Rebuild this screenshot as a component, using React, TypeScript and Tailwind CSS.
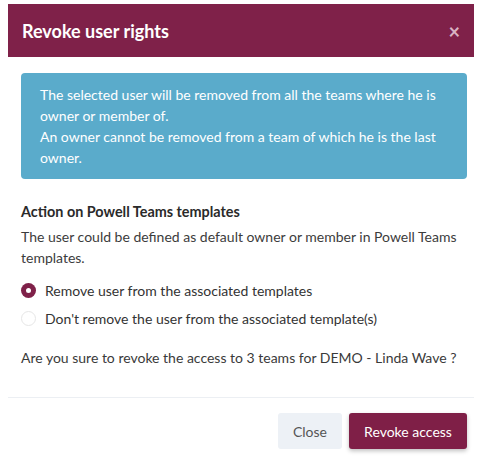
import React from "react";

export default function App() {
  return (
    <div className="w-[480px] h-[464px] bg-white pt-[4px] px-[8px] overflow-hidden" style={{ fontFamily: "Lato, 'Open Sans', sans-serif" }}>
      <div className="w-[466px] flex flex-col">
        <div className="h-[53px] bg-[#7f2149] flex items-center justify-between pl-[14px] pr-[14px]">
          <span className="text-white text-[18px] font-bold leading-none">Revoke user rights</span>
          <span className="text-[#d9b3c3] text-[20px] leading-none font-bold">×</span>
        </div>
        <div className="pl-[13px] flex flex-col">
          <div className="mt-[16px] w-[446px] h-[106px] rounded-[4px] bg-[#5aabcb] px-[19px] py-[11px] text-white text-[14px] leading-[21px]">
            <p>The selected user will be removed from all the teams where he is owner or member of.</p>
            <p>An owner cannot be removed from a team of which he is the last owner.</p>
          </div>
          <div className="mt-[22px] text-[14.4px] font-bold leading-[21px] text-[#2a2a2a]">Action on Powell Teams templates</div>
          <p className="mt-[4px] w-[446px] text-[14px] leading-[21px] text-[#3c3c3c]">
            The user could be defined as default owner or member in Powell Teams templates.
          </p>
          <div className="mt-[8px] flex flex-col text-[14px] text-[#333]">
            <label className="h-[28px] flex items-center gap-[9px]">
              <span className="w-[15px] h-[15px] rounded-full bg-[#7f2149] flex items-center justify-center">
                <span className="w-[5px] h-[5px] rounded-full bg-white" />
              </span>
              <span>Remove user from the associated templates</span>
            </label>
            <label className="h-[28px] flex items-center gap-[9px]">
              <span className="w-[15px] h-[15px] rounded-full border border-[#e6e6e6] bg-white" />
              <span>Don't remove the user from the associated template(s)</span>
            </label>
          </div>
          <p className="mt-[15px] text-[14px] leading-[21px] text-[#3a3a3a]">
            Are you sure to revoke the access to 3 teams for DEMO - Linda Wave ?
          </p>
        </div>
        <div className="mt-[29px] h-px bg-[#eceff3]" />
        <div className="mt-[15px] flex justify-end gap-[7px] pr-[7px]">
          <button className="h-[36px] w-[64px] rounded-[3px] bg-[#edf1f6] text-[#555] text-[14px]">Close</button>
          <button className="h-[36px] w-[118px] rounded-[3px] bg-[#7f1f47] text-white text-[14px] shadow-[0_2px_4px_rgba(0,0,0,0.25)]">Revoke access</button>
        </div>
      </div>
    </div>
  );
}
